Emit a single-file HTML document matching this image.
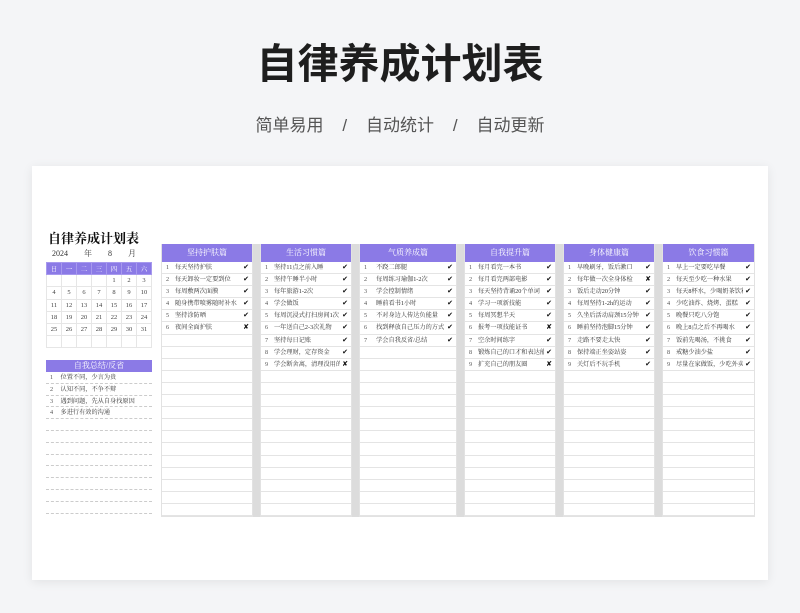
<!DOCTYPE html><html><head><meta charset="utf-8"><style>
*{margin:0;padding:0;box-sizing:border-box}
body{width:800px;height:613px;background:#f4f5f7;font-family:"Liberation Serif","Noto Serif CJK SC",serif;position:relative;overflow:hidden}
.t{position:absolute;top:30px;width:800px;text-align:center;font:bold 41px "Liberation Sans","Noto Sans CJK SC",sans-serif;color:#1e1e1e;letter-spacing:0}
.s{position:absolute;top:111px;width:800px;text-align:center;font:17px "Liberation Sans","Noto Sans CJK SC",sans-serif;color:#555;word-spacing:0}
.card{position:absolute;left:32px;top:166px;width:736px;height:414px;background:#fff;box-shadow:0 2px 10px rgba(0,0,0,.08)}
.a{position:absolute}
.col{position:absolute;top:244px;height:273px;border:1px solid #e2e2e2;border-top:none}
.hd{height:18px;background:#8b7ae6;color:#fff;font-size:8px;text-align:center;line-height:18px}
.r{height:12.1px;border-bottom:1px solid #e4e4e4;font-size:6.2px;line-height:11px;color:#333;padding-left:4px;position:relative;white-space:nowrap;overflow:hidden}
.r b{font-weight:normal;display:inline-block;width:9px;color:#555}
.r i{font-style:normal;position:absolute;right:0;top:0;padding:0 3px 0 2px;background:#fff;font-family:"DejaVu Sans",sans-serif;font-size:7px;color:#111}
.g{position:absolute;top:244px;height:273px;background:#dcdcdc}
table{border-collapse:collapse}
.cal td{width:15.1px;height:12.2px;border:1px solid #e6e6e6;font-size:6.5px;text-align:center;color:#444}
.cal tr:first-child td{background:#8b7ae6;color:#fff;border-color:#a799ee}
.rf .r{border-bottom:1px dashed #ccc;height:11.8px}
</style></head><body>
<div class="t">自律养成计划表</div>
<div class="s">简单易用 &nbsp;&nbsp;&nbsp;/&nbsp;&nbsp;&nbsp; 自动统计 &nbsp;&nbsp;&nbsp;/&nbsp;&nbsp;&nbsp; 自动更新</div>
<div class="card"></div>
<div class="a" style="left:48px;top:228px;font:bold 13px 'Liberation Serif','Noto Serif CJK SC',serif;color:#111">自律养成计划表</div>
<div class="a" style="left:52px;top:248px;font-size:8px;color:#333;word-spacing:6px">2024 &nbsp;年 &nbsp;8 &nbsp;月</div>
<table class="cal a" style="left:46px;top:262px;width:106px">
<tr><td>日</td><td>一</td><td>二</td><td>三</td><td>四</td><td>五</td><td>六</td></tr>
<tr><td></td><td></td><td></td><td></td><td>1</td><td>2</td><td>3</td></tr>
<tr><td>4</td><td>5</td><td>6</td><td>7</td><td>8</td><td>9</td><td>10</td></tr>
<tr><td>11</td><td>12</td><td>13</td><td>14</td><td>15</td><td>16</td><td>17</td></tr>
<tr><td>18</td><td>19</td><td>20</td><td>21</td><td>22</td><td>23</td><td>24</td></tr>
<tr><td>25</td><td>26</td><td>27</td><td>28</td><td>29</td><td>30</td><td>31</td></tr>
<tr><td></td><td></td><td></td><td></td><td></td><td></td><td></td></tr>
</table>
<div class="a rf" style="left:46px;top:360px;width:106px">
<div class="hd" style="height:12px;line-height:12px">自我总结/反省</div>
<div class="r"><b>1</b> 位置不同，少言为贵</div>
<div class="r"><b>2</b> 认知不同，不争不辩</div>
<div class="r"><b>3</b> 遇到问题，先从自身找原因</div>
<div class="r"><b>4</b> 多进行有效的沟通</div>
<div class="r"></div><div class="r"></div><div class="r"></div><div class="r"></div><div class="r"></div><div class="r"></div><div class="r"></div><div class="r"></div>
</div>
<div class="g" style="left:253px;width:7px"></div>
<div class="g" style="left:352px;width:7px"></div>
<div class="g" style="left:457px;width:7px"></div>
<div class="g" style="left:556px;width:7px"></div>
<div class="g" style="left:655px;width:7px"></div>

<div class="col" style="left:161px;width:92px"><div class="hd">坚持护肤篇</div>
<div class="r"><b>1</b>每天坚持护肤<i>✔</i></div>
<div class="r"><b>2</b>每天卸妆一定要到位<i>✔</i></div>
<div class="r"><b>3</b>每周敷两次面膜<i>✔</i></div>
<div class="r"><b>4</b>随身携带喷雾随时补水<i>✔</i></div>
<div class="r"><b>5</b>坚持涂防晒<i>✔</i></div>
<div class="r"><b>6</b>夜间全面护肤<i>✘</i></div>
<div class="r"></div><div class="r"></div><div class="r"></div><div class="r"></div><div class="r"></div><div class="r"></div><div class="r"></div><div class="r"></div><div class="r"></div><div class="r"></div><div class="r"></div><div class="r"></div><div class="r"></div><div class="r"></div><div class="r"></div></div>

<div class="col" style="left:260px;width:92px"><div class="hd">生活习惯篇</div>
<div class="r"><b>1</b>坚持11点之前入睡<i>✔</i></div>
<div class="r"><b>2</b>坚持午睡半小时<i>✔</i></div>
<div class="r"><b>3</b>每年旅游1-2次<i>✔</i></div>
<div class="r"><b>4</b>学会做饭<i>✔</i></div>
<div class="r"><b>5</b>每周沉浸式打扫房间1次<i>✔</i></div>
<div class="r"><b>6</b>一年送自己2-3次礼物<i>✔</i></div>
<div class="r"><b>7</b>坚持每日记账<i>✔</i></div>
<div class="r"><b>8</b>学会理财，定存资金<i>✔</i></div>
<div class="r"><b>9</b>学会断舍离，清理没用的<i>✘</i></div>
<div class="r"></div><div class="r"></div><div class="r"></div><div class="r"></div><div class="r"></div><div class="r"></div><div class="r"></div><div class="r"></div><div class="r"></div><div class="r"></div><div class="r"></div><div class="r"></div></div>

<div class="col" style="left:359px;width:98px"><div class="hd">气质养成篇</div>
<div class="r"><b>1</b>&nbsp; 不跷二郎腿<i>✔</i></div>
<div class="r"><b>2</b>&nbsp; 每周练习瑜伽1-2次<i>✔</i></div>
<div class="r"><b>3</b>&nbsp; 学会控制情绪<i>✔</i></div>
<div class="r"><b>4</b>&nbsp; 睡前看书1小时<i>✔</i></div>
<div class="r"><b>5</b>&nbsp; 不对身边人传达负能量<i>✔</i></div>
<div class="r"><b>6</b>&nbsp; 找到释放自己压力的方式<i>✔</i></div>
<div class="r"><b>7</b>&nbsp; 学会自我反省/总结<i>✔</i></div>
<div class="r"></div><div class="r"></div><div class="r"></div><div class="r"></div><div class="r"></div><div class="r"></div><div class="r"></div><div class="r"></div><div class="r"></div><div class="r"></div><div class="r"></div><div class="r"></div><div class="r"></div><div class="r"></div></div>

<div class="col" style="left:464px;width:92px"><div class="hd">自我提升篇</div>
<div class="r"><b>1</b>每月看完一本书<i>✔</i></div>
<div class="r"><b>2</b>每月看完两部电影<i>✔</i></div>
<div class="r"><b>3</b>每天坚持背诵20个单词<i>✔</i></div>
<div class="r"><b>4</b>学习一项新技能<i>✔</i></div>
<div class="r"><b>5</b>每周冥想半天<i>✔</i></div>
<div class="r"><b>6</b>报考一项技能证书<i>✘</i></div>
<div class="r"><b>7</b>空余时间练字<i>✔</i></div>
<div class="r"><b>8</b>锻炼自己的口才和表达能<i>✔</i></div>
<div class="r"><b>9</b>扩充自己的朋友圈<i>✘</i></div>
<div class="r"></div><div class="r"></div><div class="r"></div><div class="r"></div><div class="r"></div><div class="r"></div><div class="r"></div><div class="r"></div><div class="r"></div><div class="r"></div><div class="r"></div><div class="r"></div></div>

<div class="col" style="left:563px;width:92px"><div class="hd">身体健康篇</div>
<div class="r"><b>1</b>早晚刷牙，饭后漱口<i>✔</i></div>
<div class="r"><b>2</b>每年做一次全身体检<i>✘</i></div>
<div class="r"><b>3</b>饭后走动20分钟<i>✔</i></div>
<div class="r"><b>4</b>每周坚持1-2h的运动<i>✔</i></div>
<div class="r"><b>5</b>久坐后活动肩颈15分钟<i>✔</i></div>
<div class="r"><b>6</b>睡前坚持泡脚15分钟<i>✔</i></div>
<div class="r"><b>7</b>走路不要走太快<i>✔</i></div>
<div class="r"><b>8</b>保持端正坐姿站姿<i>✔</i></div>
<div class="r"><b>9</b>关灯后不玩手机<i>✔</i></div>
<div class="r"></div><div class="r"></div><div class="r"></div><div class="r"></div><div class="r"></div><div class="r"></div><div class="r"></div><div class="r"></div><div class="r"></div><div class="r"></div><div class="r"></div><div class="r"></div></div>

<div class="col" style="left:662px;width:93px"><div class="hd">饮食习惯篇</div>
<div class="r"><b>1</b>早上一定要吃早餐<i>✔</i></div>
<div class="r"><b>2</b>每天至少吃一种水果<i>✔</i></div>
<div class="r"><b>3</b>每天8杯水，少喝奶茶饮料<i>✔</i></div>
<div class="r"><b>4</b>少吃油炸、烧烤、蛋糕<i>✔</i></div>
<div class="r"><b>5</b>晚餐只吃八分饱<i>✔</i></div>
<div class="r"><b>6</b>晚上8点之后不再喝水<i>✔</i></div>
<div class="r"><b>7</b>饭前先喝汤，不挑食<i>✔</i></div>
<div class="r"><b>8</b>戒糖少油少盐<i>✔</i></div>
<div class="r"><b>9</b>尽量在家做饭，少吃外卖<i>✔</i></div>
<div class="r"></div><div class="r"></div><div class="r"></div><div class="r"></div><div class="r"></div><div class="r"></div><div class="r"></div><div class="r"></div><div class="r"></div><div class="r"></div><div class="r"></div><div class="r"></div></div>
</body></html>
